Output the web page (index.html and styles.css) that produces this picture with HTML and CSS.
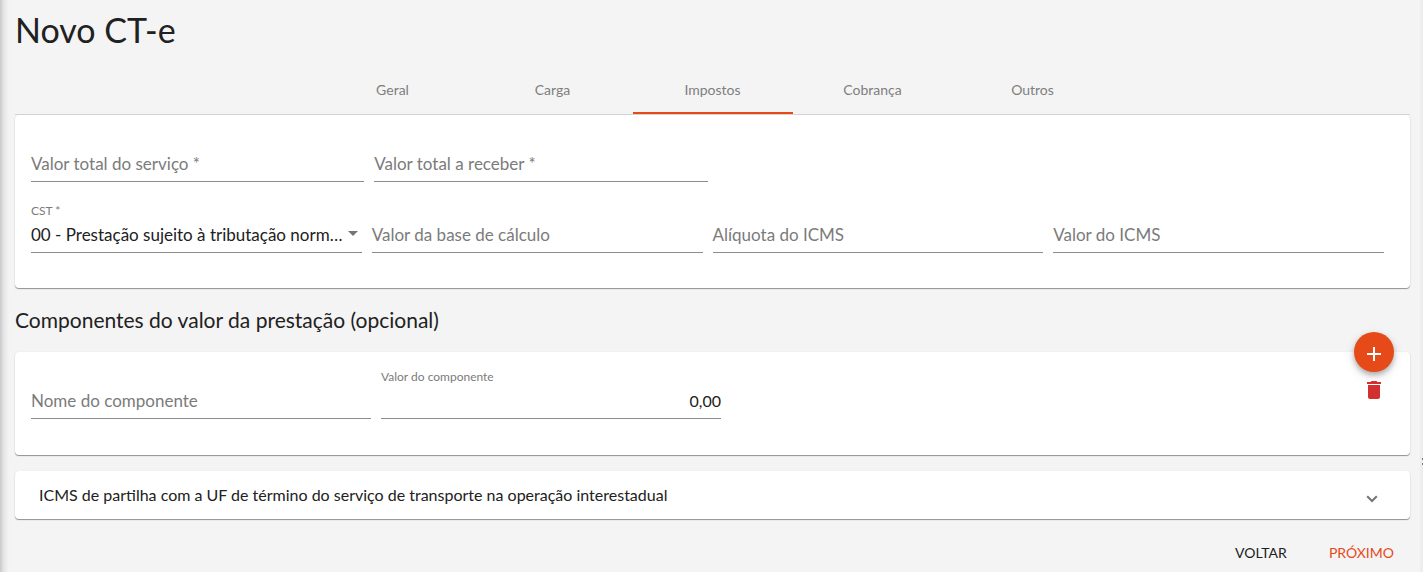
FILE: index.html
```html
<!DOCTYPE html>
<html lang="pt-BR">
<head>
<meta charset="utf-8">
<meta name="viewport" content="width=device-width, initial-scale=1">
<title>Novo CT-e</title>
<link rel="stylesheet" href="styles.css">
</head>
<body>
<div class="layout">
  <main class="page">
    <h1 class="page-title">Novo CT-e</h1>
    <nav class="tabs" role="tablist">
      <button class="tab" role="tab" type="button">Geral</button>
      <button class="tab" role="tab" type="button">Carga</button>
      <button class="tab tab-active" role="tab" type="button" aria-selected="true">Impostos</button>
      <button class="tab" role="tab" type="button">Cobrança</button>
      <button class="tab" role="tab" type="button">Outros</button>
    </nav>

    <section class="card card-taxes">
      <div class="row">
        <div class="field">
          <label class="label" for="total">Valor total do serviço *</label>
          <input class="control" id="total" type="text">
        </div>
        <div class="field">
          <label class="label" for="receber">Valor total a receber *</label>
          <input class="control" id="receber" type="text">
        </div>
      </div>
      <div class="row row-inset">
        <div class="field">
          <label class="label label-float" for="cst">CST *</label>
          <select class="control control-select" id="cst">
            <option>00 - Prestação sujeito à tributação normal do ICMS</option>
          </select>
          <svg class="arrow" viewBox="0 0 10 5" aria-hidden="true"><path d="M0 0h10L5 5z"/></svg>
        </div>
        <div class="field">
          <label class="label" for="base">Valor da base de cálculo</label>
          <input class="control" id="base" type="text">
        </div>
        <div class="field">
          <label class="label" for="aliquota">Alíquota do ICMS</label>
          <input class="control" id="aliquota" type="text">
        </div>
        <div class="field">
          <label class="label" for="icms">Valor do ICMS</label>
          <input class="control" id="icms" type="text">
        </div>
      </div>
    </section>

    <h2 class="section-title">Componentes do valor da prestação (opcional)</h2>

    <section class="card card-components">
      <div class="component-fields">
        <div class="field">
          <label class="label" for="nome">Nome do componente</label>
          <input class="control" id="nome" type="text">
        </div>
        <div class="field">
          <label class="label label-float" for="valor">Valor do componente</label>
          <input class="control control-number" id="valor" type="text" value="0,00">
        </div>
      </div>
      <button class="add" type="button" aria-label="Adicionar componente">
        <svg class="add-icon" viewBox="0 0 14 14" aria-hidden="true"><path d="M6 0h2v6h6v2H8v6H6V8H0V6h6z"/></svg>
      </button>
      <button class="remove" type="button" aria-label="Remover componente">
        <svg class="remove-icon" viewBox="0 0 14 18" aria-hidden="true"><path d="M1 16c0 1.100.9 2 2 2h8c1.100 0 2-.9 2-2V4H1v12zM14 1h-3.500l-1-1h-5l-1 1H0v2h14V1z"/></svg>
      </button>
    </section>

    <button class="card panel" type="button" aria-expanded="false">
      <span>ICMS de partilha com a UF de término do serviço de transporte na operação interestadual</span>
      <svg class="chevron" viewBox="0 0 12 8" aria-hidden="true"><path d="M1.200 1.200 6 6l4.800-4.800"/></svg>
    </button>

    <div class="actions">
      <button class="action" type="button">VOLTAR</button>
      <button class="action action-primary" type="button">PRÓXIMO</button>
    </div>
  </main>
  <div class="splitter"><span class="grip"></span><span class="grip"></span></div>
</div>
</body>
</html>
```
FILE: styles.css
```css
* { box-sizing: border-box; }

body {
  margin: 0;
  background: #f4f4f4;
  color: #212121;
  font-family: Lato, "Open Sans", sans-serif;
  font-size: 17px;
}

button, input, select {
  margin: 0;
  padding: 0;
  border: 0;
  border-radius: 0;
  background: none;
  color: inherit;
  font: inherit;
}

button { cursor: pointer; }

.layout {
  display: flex;
  min-height: 100vh;
  overflow: hidden;
}

.page {
  flex: 1;
  min-width: 0;
  padding: 0 10px 0 15px;
  background: linear-gradient(to right, #c9c9c9, #e6e6e6 4px, #f4f4f4 9px);
}

.splitter {
  flex: none;
  width: 3px;
  padding-top: 458px;
  background: #eeeeee;
}

.grip {
  display: block;
  width: 1px;
  height: 2px;
  margin: 0 0 3px 2px;
  background: #777777;
}

.page-title {
  margin: 0;
  height: 66px;
  font-size: 34px;
  font-weight: 400;
  line-height: 60px;
}

.tabs {
  display: flex;
  justify-content: center;
  border-bottom: 1px solid #d6d6d6;
}

.tab {
  width: 160px;
  height: 48px;
  border-bottom: 2px solid transparent;
  color: #7e7e7e;
  font-size: 14px;
}

.tab-active { border-bottom-color: #e64a19; }

.card {
  border-radius: 4px;
  background: #ffffff;
  box-shadow: 0 1px 1px rgba(0, 0, 0, .4), 0 0 2px rgba(0, 0, 0, .06);
}

.card-taxes {
  display: grid;
  gap: 19px;
  padding: 15px 16px 35px;
}

.row {
  display: grid;
  grid-template-columns: repeat(4, minmax(0, 1fr));
  gap: 10px;
}

.row-inset { padding-right: 10px; }

.field {
  display: grid;
  grid-template-columns: minmax(0, 1fr);
  grid-template-rows: 20px 32px;
}

.label {
  grid-area: 2 / 1;
  color: #7b7b7b;
  line-height: 28px;
  pointer-events: none;
}

.label-float {
  grid-area: 1 / 1;
  font-size: 12px;
  line-height: 20px;
}

.control {
  grid-area: 2 / 1;
  width: 100%;
  height: 32px;
  padding-bottom: 5px;
  border-bottom: 1px solid #8c8c8c;
  outline: 0;
}

.control-select {
  appearance: none;
  padding-right: 17px;
  text-overflow: ellipsis;
  white-space: nowrap;
  overflow: hidden;
}

.control-number {
  font-size: 16px;
  text-align: right;
}

.arrow {
  grid-area: 2 / 1;
  justify-self: end;
  width: 10px;
  height: 5px;
  margin: 10px 4px 0 0;
  fill: #757575;
  pointer-events: none;
}

.section-title {
  margin: 0;
  height: 64px;
  font-size: 21px;
  font-weight: 400;
  line-height: 63px;
}

.card-components {
  position: relative;
  padding: 15px 16px 36px;
}

.component-fields {
  display: grid;
  grid-template-columns: repeat(2, 340px);
  gap: 10px;
}

.add {
  position: absolute;
  top: -20px;
  right: 16px;
  display: flex;
  align-items: center;
  justify-content: center;
  width: 40px;
  height: 40px;
  padding-top: 4px;
  border-radius: 50%;
  background: #e64a19;
  box-shadow: 0 3px 5px rgba(0, 0, 0, .25), 0 4px 12px rgba(0, 0, 0, .12);
}

.add-icon {
  width: 14px;
  height: 14px;
  fill: #ffffff;
}

.remove {
  position: absolute;
  top: 29px;
  right: 29px;
  display: flex;
}

.remove-icon {
  width: 14px;
  height: 18px;
  fill: #d32f2f;
}

.panel {
  display: flex;
  align-items: center;
  justify-content: space-between;
  width: 100%;
  min-height: 48px;
  margin-top: 16px;
  padding: 0 32px 2px 24px;
  font-size: 16px;
  text-align: left;
  border-radius: 4px;
  background: #ffffff;
}

.chevron {
  width: 12px;
  height: 8px;
  margin-top: 10px;
  fill: none;
  stroke: #757575;
  stroke-width: 2;
}

.actions {
  display: flex;
  justify-content: flex-end;
  gap: 42px;
  padding: 15px 16px 0 0;
}

.action {
  height: 36px;
  font-size: 14px;
}

.action-primary { color: #e64a19; }
```
